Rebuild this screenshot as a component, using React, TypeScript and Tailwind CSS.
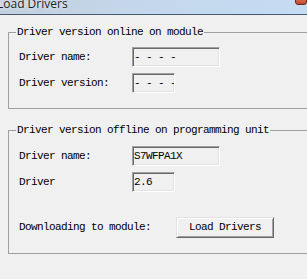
const mono = "font-['Liberation_Mono',monospace] text-[11px] tracking-[-0.6px] leading-[13px] text-black"

function Field({ value, wide }: { value: string; wide?: boolean }) {
  return (
    <div
      className={`${wide ? 'w-[88px]' : 'w-[43px]'} flex h-[20px] items-center overflow-hidden whitespace-nowrap border border-t-[#a0a0a0] border-l-[#a0a0a0] border-b-white border-r-white bg-[#f0f0f0] pl-[1px] shadow-[inset_1px_1px_0_#696969,inset_-1px_-1px_0_#e3e3e3]`}
    >
      {value}
    </div>
  )
}

function Group({ title, children, className }: { title: string; children: React.ReactNode; className?: string }) {
  return (
    <fieldset className={`w-[320px] border border-[#a0a0a0] ${className ?? ''}`}>
      <legend className="ml-[7px] px-[1px] leading-[13px]">{title}</legend>
      {children}
    </fieldset>
  )
}

export default function App() {
  return (
    <div className={`flex h-[279px] w-[307px] flex-col overflow-hidden bg-[#f0f0f0] ${mono}`}>
      <div className="flex h-[15px] shrink-0 items-start justify-between border-b border-[#4a5a70] bg-gradient-to-r from-[#c2d0de] via-[#c4d7ec] to-[#c6dcf3]">
        <span className="-ml-[3px] -mt-[3px] font-['Segoe_UI','Open_Sans',sans-serif] text-[12px] leading-[14px] tracking-normal text-[#1e1e1e] [text-shadow:0_0_4px_#ffffff]">
          Load Drivers
        </span>
        <div className="-mt-[6px] h-[11px] w-[12px] rounded-[3px] border border-[#6b2a1f] bg-gradient-to-b from-[#e08a72] to-[#c2472b]" />
      </div>

      <div className="pl-[8px]">
        <Group title="Driver version online on module" className="mt-[11px] pb-[15px] pt-[8px]">
          <div className="grid grid-cols-[113px_auto] items-center gap-y-[6px] pl-[10px]">
            <span>Driver name:</span>
            <Field value="- - - -" wide />
            <span>Driver version:</span>
            <Field value="- - - -" />
          </div>
        </Group>

        <Group title="Driver version offline on programming unit" className="mt-[15px] pb-[15px] pt-[9px]">
          <div className="grid grid-cols-[113px_auto] items-center gap-y-[6px] pl-[10px]">
            <span>Driver name:</span>
            <Field value="S7WFPA1X" wide />
            <span>Driver</span>
            <Field value="2.6" />
          </div>
          <div className="mt-[25px] flex items-center pl-[10px]">
            <span className="w-[157px]">Downloading to module:</span>
            <button
              type="button"
              className="h-[21px] w-[98px] border border-t-[#e3e3e3] border-l-[#e3e3e3] border-b-[#696969] border-r-[#696969] bg-[#f0f0f0] shadow-[inset_1px_1px_0_#ffffff,inset_-1px_-1px_0_#a0a0a0]"
            >
              Load Drivers
            </button>
          </div>
        </Group>
      </div>
    </div>
  )
}
